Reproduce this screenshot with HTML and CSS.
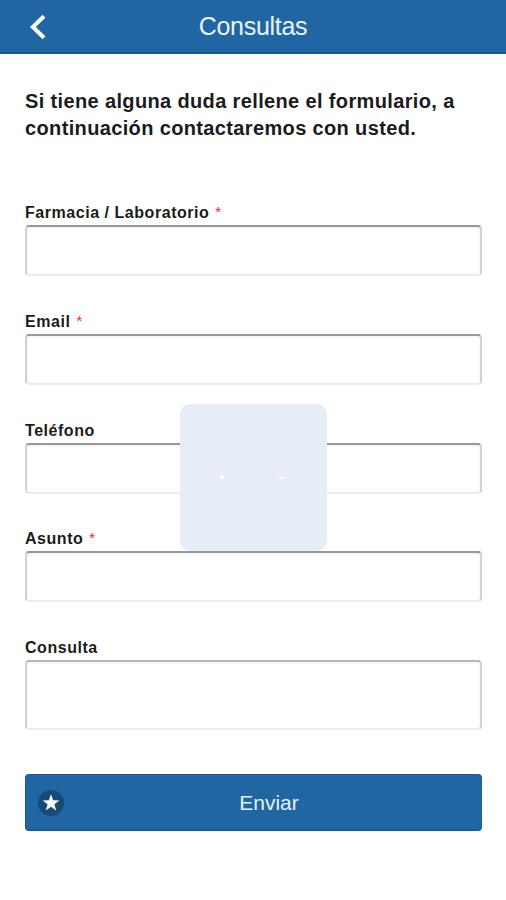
FILE: index.html
```html
<!DOCTYPE html>
<html lang="es">
<head>
<meta charset="utf-8">
<title>Consultas</title>
<link rel="stylesheet" href="styles.css">
</head>
<body>
<header class="topbar">
  <a class="back" aria-label="Atrás"><svg width="18" height="26" viewBox="0 0 18 26"><path d="M15 2.3 3.9 13l11.1 10.7" fill="none" stroke="#fff" stroke-width="4"/></svg></a>
  <h1 class="title"><span>Consultas</span></h1>
</header>
<main class="content">
  <p class="intro"><span>Si tiene alguna duda rellene el formulario, a</span><br><span>continuación contactaremos con usted.</span></p>
  <form class="form">
    <div class="field"><label class="label" for="f1">Farmacia / Laboratorio <span class="req">*</span></label><input class="input" id="f1"></div>
    <div class="field"><label class="label" for="f2">Email <span class="req">*</span></label><input class="input" id="f2"></div>
    <div class="field"><label class="label" for="f3">Teléfono</label><input class="input" id="f3"></div>
    <div class="field"><label class="label" for="f4">Asunto <span class="req">*</span></label><input class="input" id="f4"></div>
    <div class="field"><label class="label" for="f5">Consulta</label><textarea class="input area" id="f5"></textarea></div>
    <button class="submit" type="button">
      <svg class="star" width="26" height="26" viewBox="0 0 26 26"><circle cx="13" cy="13" r="13" fill="#174a77"/><path d="M13 4.2l2.1 6.1 6.2.1-4.9 3.9 1.8 6.1L13 16.8l-5.2 3.6 1.8-6.1-4.9-3.9 6.2-.1z" fill="#fff"/></svg>
      <span>Enviar</span>
    </button>
  </form>
</main>
<div class="loader"><i class="dot"></i><i class="dot small"></i></div>
</body>
</html>
```

FILE: styles.css
```css
* { box-sizing: border-box; }
body {
  margin: 0;
  min-height: 900px;
  background: #fff;
  color: #1b1b1b;
  font-family: "Liberation Sans", Arial, sans-serif;
  position: relative;
}
.topbar {
  display: grid;
  grid-template-columns: 60px 1fr 60px;
  align-items: center;
  height: 54px;
  background: #2066a3;
  border-bottom: 2px solid #155c9e;
}
.back { display: flex; padding-left: 29px; padding-top: 2px; }
.title {
  margin: 0;
  text-align: center;
  font-size: 25px;
  letter-spacing: -0.3px;
  font-weight: 400;
  line-height: 30px;
  color: #eaf3ff;
}
.content { padding: 34px 24px 0 25px; }
.intro {
  margin: 0;
  font-size: 20px;
  font-weight: 700;
  line-height: 27px;
  letter-spacing: 0.36px;
  white-space: nowrap;
}
.form { padding-top: 60px; }
.field { height: 108.8px; }
.field:nth-child(5) { height: 136.8px; }
.label {
  display: block;
  height: 23px;
  padding-top: 1px;
  font-size: 16px;
  font-weight: 700;
  line-height: 20px;
  letter-spacing: 0.54px;
}
.req { color: #f22; font-size: 15px; line-height: 1; font-weight: 400; margin-left: 1px; vertical-align: 1px; }
.input {
  display: block;
  width: 100%;
  height: 51px;
  margin: 0;
  padding: 0 10px;
  border: 2px solid #d2d2d2;
  border-top-color: #989898;
  border-bottom-color: #ececec;
  border-radius: 4px;
  background: #fff;
  box-shadow: inset 0 1px 3px #eee;
  font: inherit;
  resize: none;
  outline: none;
}
.area { height: 70px; border-top-color: #b8b8b8; }
.submit {
  display: grid;
  grid-template-columns: 26px 1fr;
  align-items: center;
  width: 100%;
  height: 57px;
  margin: 0;
  padding: 0 7px 0 12px;
  border: 1px solid #155c9e;
  border-bottom-width: 2px;
  border-radius: 4px;
  background: #2066a3;
  color: #e4f1ff;
  font: 21px/24px "Liberation Sans", Arial, sans-serif;
}
.submit span { padding-top: 2px; }
.star { margin-top: 2px; }
.loader {
  position: absolute;
  left: 180px;
  top: 404px;
  width: 147px;
  height: 147px;
  padding: 71px 43px 0 40px;
  display: flex;
  justify-content: space-between;
  border-radius: 10px;
  background: #e6edf6;
}
.dot { width: 4px; height: 4px; border-radius: 2px; background: #fff; }
.small { width: 6px; height: 2px; margin-top: 2px; opacity: .8; }
```
